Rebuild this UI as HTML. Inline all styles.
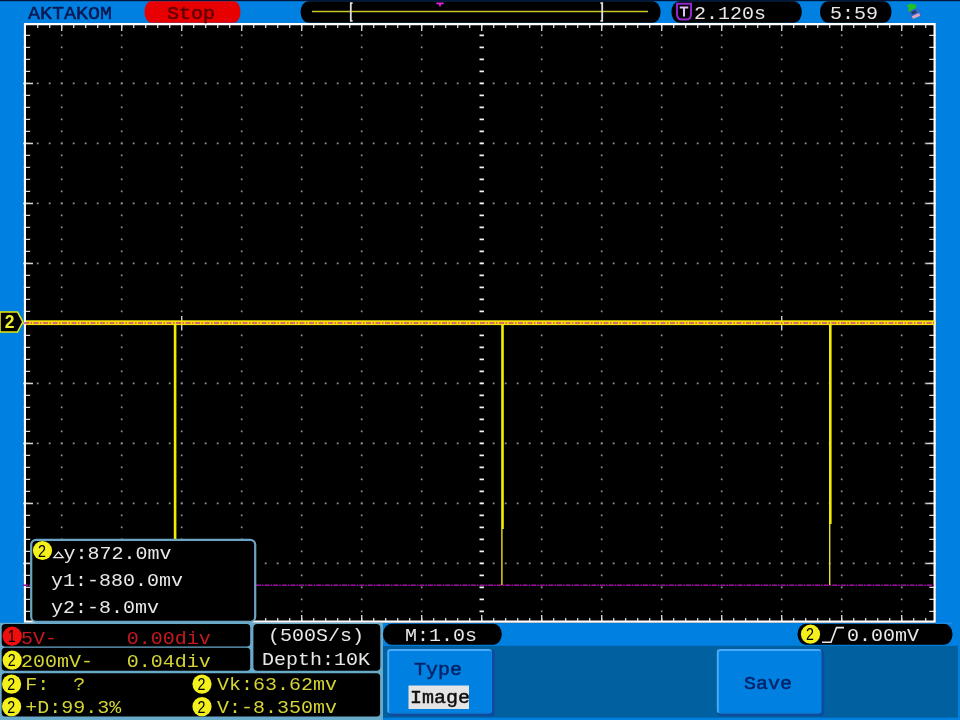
<!DOCTYPE html><html><head><meta charset="utf-8"><title>AKTAKOM</title>
<style>html,body{margin:0;padding:0;background:#0080e0;overflow:hidden}svg{display:block}
text{font-family:"Liberation Mono","DejaVu Sans Mono",monospace;font-size:17.6px;white-space:pre}
.s{font-family:"Liberation Sans",sans-serif;font-size:17px;text-anchor:middle}
</style></head><body>
<svg width="960" height="720" viewBox="0 0 960 720">
<defs><filter id="b" x="0" y="0" width="960" height="720" filterUnits="userSpaceOnUse"><feGaussianBlur stdDeviation="0.45"/></filter></defs>
<rect width="960" height="720" fill="#0080e0"/>
<g filter="url(#b)">
<rect x="-5" y="-5" width="970" height="730" fill="#0080e0"/>
<rect x="-5" y="-5" width="970" height="6.2" fill="#04163a"/>
<rect x="23.8" y="23" width="912" height="599.8" fill="#000"/>
<g stroke="#909090" stroke-width="1.7" fill="none">
<path d="M61.7 34.5 V620" stroke-dasharray="1.8 10.2"/>
<path d="M121.7 34.5 V620" stroke-dasharray="1.8 10.2"/>
<path d="M181.7 34.5 V620" stroke-dasharray="1.8 10.2"/>
<path d="M241.7 34.5 V620" stroke-dasharray="1.8 10.2"/>
<path d="M301.7 34.5 V620" stroke-dasharray="1.8 10.2"/>
<path d="M361.7 34.5 V620" stroke-dasharray="1.8 10.2"/>
<path d="M421.7 34.5 V620" stroke-dasharray="1.8 10.2"/>
<path d="M541.7 34.5 V620" stroke-dasharray="1.8 10.2"/>
<path d="M601.7 34.5 V620" stroke-dasharray="1.8 10.2"/>
<path d="M661.7 34.5 V620" stroke-dasharray="1.8 10.2"/>
<path d="M721.7 34.5 V620" stroke-dasharray="1.8 10.2"/>
<path d="M781.7 34.5 V620" stroke-dasharray="1.8 10.2"/>
<path d="M841.7 34.5 V620" stroke-dasharray="1.8 10.2"/>
<path d="M901.7 34.5 V620" stroke-dasharray="1.8 10.2"/>
<path d="M36.8 83.4 H933" stroke-dasharray="1.8 10.2"/>
<path d="M36.8 143.4 H933" stroke-dasharray="1.8 10.2"/>
<path d="M36.8 203.4 H933" stroke-dasharray="1.8 10.2"/>
<path d="M36.8 263.4 H933" stroke-dasharray="1.8 10.2"/>
<path d="M36.8 383.4 H933" stroke-dasharray="1.8 10.2"/>
<path d="M36.8 443.4 H933" stroke-dasharray="1.8 10.2"/>
<path d="M36.8 503.4 H933" stroke-dasharray="1.8 10.2"/>
<path d="M36.8 563.4 H933" stroke-dasharray="1.8 10.2"/>
</g>
<g stroke="#f4f4f4" fill="none">
<path d="M481.7 34.6 V620" stroke-width="4.4" stroke-dasharray="1.6 10.4"/>
<path d="M181.7 316 V330.5 M781.7 316 V330.5" stroke-width="1.4" stroke="#d0d0d0"/>
</g>
<g stroke="#d8d8d8" fill="none">
<path d="M37.05 26 H933" stroke-width="4" stroke-dasharray="1.3 10.7"/>
<path d="M37.05 620 H933" stroke-width="4" stroke-dasharray="1.3 10.7"/>
<path d="M61 27.5 H933" stroke-width="7" stroke-dasharray="1.4 58.6"/>
<path d="M61 618.5 H933" stroke-width="7" stroke-dasharray="1.4 58.6"/>
<path d="M27 34.7 V620" stroke-width="6.4" stroke-dasharray="1.4 10.6"/>
<path d="M932.5 34.7 V620" stroke-width="6.4" stroke-dasharray="1.4 10.6"/>
<path d="M28 82.65 V620" stroke-width="10" stroke-dasharray="1.5 58.5"/>
<path d="M931 82.65 V620" stroke-width="9.4" stroke-dasharray="1.5 58.5"/>
</g>
<path fill-rule="evenodd" fill="#fff" d="M23.8 23 H935.8 V622.8 H23.8 Z M26 25.3 V620.4 H933.5 V25.3 Z"/>
<path d="M23 585.2 H30 M256 585.2 H934" stroke="#a010a4" stroke-width="1.4" stroke-dasharray="5 1 1.6 1" fill="none"/>
<rect x="26" y="320.3" width="908.5" height="4.8" fill="#f4e400"/>
<path d="M24 323 H934" stroke="#cc4090" stroke-width="1.6" stroke-dasharray="5 1.5 1.5 1.5" fill="none"/>
<rect x="173.8" y="324" width="2.6" height="216" fill="#f4ec00"/>
<rect x="501.2" y="324" width="2.6" height="205" fill="#f4ec00"/>
<rect x="501.2" y="529" width="1.4" height="56" fill="#e8e020"/>
<rect x="829" y="324" width="2.6" height="200" fill="#f4ec00"/>
<rect x="829" y="524" width="1.4" height="61" fill="#e8e020"/>
<path d="M0 312 H17.5 L22.8 322 L17.5 332 H0 Z" fill="#000" stroke="#e8e800" stroke-width="1.6"/>
<text class="s" x="9.5" y="328.3" fill="#f0f030" style="font-size:17.5px;font-weight:bold">2</text>
<text transform="translate(28 18.8) scale(1.1364 1)" fill="#081850" stroke="#081850" stroke-width=".45">AKTAKOM</text>
<rect x="144.5" y="1.2" width="96" height="21.5" rx="6.5" ry="10.75" fill="#e80404"/>
<text transform="translate(167 18.8) scale(1.1364 1)" fill="#5c0000" stroke="#5c0000" stroke-width=".45">Stop</text>
<rect x="300.6" y="1.2" width="360" height="21.6" rx="8" ry="10.8" fill="#000"/>
<path d="M312 11.5 H648" stroke="#c8c820" stroke-width="1.4"/>
<path d="M352.6 3.2 H350.8 V20.8 H352.6" stroke="#e0e0e0" stroke-width="1.8" fill="none"/>
<path d="M600.4 3.2 H602.2 V20.8 H600.4" stroke="#e0e0e0" stroke-width="1.8" fill="none"/>
<path d="M436.3 2.4 H443.7 V4 L441.2 4.4 L440 7.6 L438.8 4.4 L436.3 4 Z" fill="#e020e0"/>
<rect x="671.4" y="1.2" width="130.4" height="21.6" rx="8" ry="10.8" fill="#000"/>
<path d="M677 3.8 H691 V14 Q691 19.6 686 19.6 H682 Q677 19.6 677 14 Z" fill="#000" stroke="#9428d0" stroke-width="2"/>
<path d="M679.7 7.6 H688.3 M684 7.6 V16.4" stroke="#e0c0f8" stroke-width="2" fill="none"/>
<text transform="translate(694 19.4) scale(1.1364 1)" fill="#e8e8e8">2.120s</text>
<rect x="820" y="1.2" width="71.5" height="21.6" rx="8" ry="10.8" fill="#000"/>
<text transform="translate(830 19.4) scale(1.1364 1)" fill="#e8e8e8">5:59</text>
<g><path d="M906.5 5.5 L911 3.6 L916.6 5 L915.4 8.6 L912.6 9.6 L911.4 12 L908 11.4 L908.6 8 Z" fill="#22c022"/>
<g transform="rotate(-24 915 13.5)"><rect x="909.6" y="9.4" width="10.8" height="8.6" rx="1" fill="#2a6cc8"/><rect x="911" y="14.6" width="8" height="3.2" fill="#e0a4c0"/><rect x="912" y="10.6" width="5" height="2.6" fill="#283868"/></g></g>
<rect x="-5" y="622.8" width="388" height="102" fill="#68aaca"/>
<rect x="383" y="645.8" width="575" height="71.9" fill="#0060a0"/>
<rect x="31.2" y="539.8" width="224" height="82" rx="5" fill="#000" stroke="#6ca4c4" stroke-width="2.2"/>
<circle cx="42.5" cy="550.5" r="9.6" fill="#f4f01c"/><text class="s" transform="translate(42 556.5) scale(.84 1)" fill="#000">2</text>
<path d="M53.8 557.6 L58.5 552 L63.2 557.6 Z" fill="none" stroke="#e8e8e8" stroke-width="1.3"/>
<text transform="translate(63.5 559) scale(1.1364 1)" fill="#e8e8e8">y:872.0mv</text>
<text transform="translate(51 586) scale(1.1364 1)" fill="#e8e8e8">y1:-880.0mv</text>
<text transform="translate(51 612.5) scale(1.1364 1)" fill="#e8e8e8">y2:-8.0mv</text>
<rect x="1.7" y="623.9" width="248.5" height="22.6" rx="3.5" fill="#000"/>
<rect x="1.7" y="647.8" width="248.5" height="22.9" rx="3.5" fill="#000"/>
<rect x="1.7" y="673.2" width="378.4" height="43.2" rx="3.5" fill="#000"/>
<rect x="253.4" y="623.9" width="126.9" height="46.8" rx="4" fill="#000"/>
<circle cx="12.2" cy="636.2" r="9.6" fill="#f01010"/><text class="s" transform="translate(11.7 642.2) scale(.84 1)" fill="#000">1</text>
<text transform="translate(21 643.6) scale(1.1364 1)" fill="#c81820">5V-</text>
<text transform="translate(126.8 643.6) scale(1.1364 1)" fill="#c81820">0.00div</text>
<circle cx="12.2" cy="660.2" r="9.6" fill="#f4f01c"/><text class="s" transform="translate(11.7 666.2) scale(.84 1)" fill="#000">2</text>
<text transform="translate(21 667.3) scale(1.1364 1)" fill="#d4d434">200mV-</text>
<text transform="translate(126.8 667.3) scale(1.1364 1)" fill="#d4d434">0.04div</text>
<circle cx="11.6" cy="684.1" r="9.6" fill="#f4f01c"/><text class="s" transform="translate(11.1 690.1) scale(.84 1)" fill="#000">2</text>
<text transform="translate(25.2 689.6) scale(1.1364 1)" fill="#d4d434">F:  ?</text>
<circle cx="11.6" cy="706.6" r="9.6" fill="#f4f01c"/><text class="s" transform="translate(11.1 712.6) scale(.84 1)" fill="#000">2</text>
<text transform="translate(25.2 712.6) scale(1.1364 1)" fill="#d4d434">+D:99.3%</text>
<circle cx="202" cy="684.1" r="9.6" fill="#f4f01c"/><text class="s" transform="translate(201.5 690.1) scale(.84 1)" fill="#000">2</text>
<text transform="translate(217 689.6) scale(1.1364 1)" fill="#d4d434">Vk:63.62mv</text>
<circle cx="202" cy="706.6" r="9.6" fill="#f4f01c"/><text class="s" transform="translate(201.5 712.6) scale(.84 1)" fill="#000">2</text>
<text transform="translate(217 712.6) scale(1.1364 1)" fill="#d4d434">V:-8.350mv</text>
<text transform="translate(268 641) scale(1.1364 1)" fill="#e8e8e8">(500S/s)</text>
<text transform="translate(262 664.8) scale(1.1364 1)" fill="#e8e8e8">Depth:10K</text>
<rect x="383" y="623.7" width="118.8" height="21.1" rx="8.5" ry="10.55" fill="#000"/>
<text transform="translate(405 640.8) scale(1.1364 1)" fill="#e8e8e8">M:1.0s</text>
<rect x="797.5" y="623.7" width="155" height="21.1" rx="8.5" ry="10.55" fill="#000"/>
<circle cx="810.5" cy="634.2" r="9.6" fill="#f4f01c"/><text class="s" transform="translate(810 640.2) scale(.84 1)" fill="#000">2</text>
<path d="M822 642.3 H831 L836.5 627.6 H844" stroke="#e8e8e8" stroke-width="1.6" fill="none"/>
<text transform="translate(847 640.8) scale(1.1364 1)" fill="#e8e8e8">0.00mV</text>
<path d="M936 623.2 H952" stroke="#2c98ec" stroke-width="1"/>
<rect x="388.2" y="650" width="106.6" height="66.3" rx="3" fill="#0a4c9c"/>
<rect x="387.2" y="649" width="104.6" height="64.3" rx="3" fill="#48a8f8"/>
<rect x="389.2" y="651" width="102.6" height="62.3" rx="1.5" fill="#0080e0"/>
<text transform="translate(414 674.5) scale(1.1364 1)" fill="#062468" stroke="#062468" stroke-width=".45">Type</text>
<rect x="408.5" y="685.5" width="60.5" height="23.5" fill="#e4e4e4"/>
<text transform="translate(410 702.5) scale(1.1364 1)" fill="#101010" stroke="#101010" stroke-width=".45">Image</text>
<rect x="717.8" y="650" width="106.4" height="66.3" rx="3" fill="#0a4c9c"/>
<rect x="716.8" y="649" width="104.4" height="64.3" rx="3" fill="#48a8f8"/>
<rect x="718.8" y="651" width="102.4" height="62.3" rx="1.5" fill="#0080e0"/>
<text transform="translate(744 688.5) scale(1.1364 1)" fill="#062468" stroke="#062468" stroke-width=".45">Save</text>
</g>
</svg></body></html>
